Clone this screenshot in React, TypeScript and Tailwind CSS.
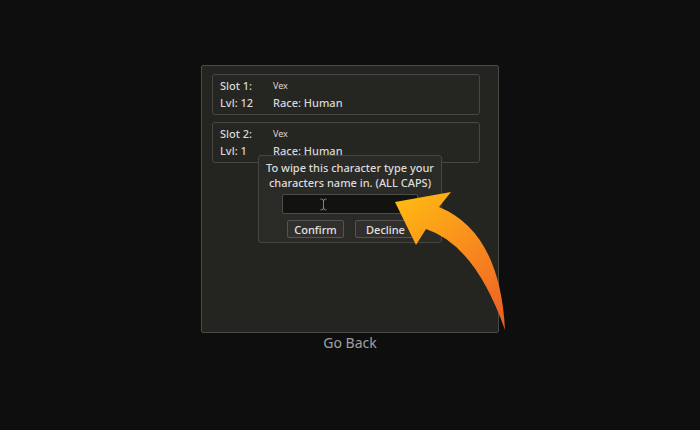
import { TextCursor } from 'lucide-react'

const slots = [
  { slot: 'Slot 1:', name: 'Vex', lvl: 'Lvl: 12', race: 'Race: Human' },
  { slot: 'Slot 2:', name: 'Vex', lvl: 'Lvl: 1', race: 'Race: Human' },
]

function CurvedArrow() {
  return (
    <svg className="absolute left-0 top-0 pointer-events-none" width="700" height="430" viewBox="0 0 700 430">
      <defs>
        <linearGradient id="arrowGrad" x1="405" y1="195" x2="505" y2="330" gradientUnits="userSpaceOnUse">
          <stop offset="0" stopColor="#ffb912" />
          <stop offset="0.5" stopColor="#f8891e" />
          <stop offset="1" stopColor="#ec5c24" />
        </linearGradient>
      </defs>
      <path
        d="M395 202 L451 192 L439 207 Q500 232 505 330 Q475 245 426 229 L416 245 Z"
        fill="url(#arrowGrad)"
      />
    </svg>
  )
}

export default function App() {
  return (
    <div
      className="relative w-[700px] h-[430px] bg-[#0e0e0e] flex flex-col items-center pt-[65px] overflow-hidden"
      style={{ fontFamily: '"Noto Sans", "Open Sans", sans-serif' }}
    >
      <div className="relative w-[298px] h-[268px] rounded-[2px] border border-[#4a4a46] bg-[#242421] pl-[10px] pt-[8px] flex flex-col gap-[7px]">
        {slots.map((s) => (
          <div
            key={s.slot}
            className="w-[268px] h-[41px] rounded-[3px] border border-[#474743] bg-[#252522] pl-[7px] pt-[2px] text-[11px] leading-[17px] font-medium text-[#d8d8d6]"
          >
            <div className="flex items-center">
              <span className="w-[53px]">{s.slot}</span>
              <span className="text-[9px] font-normal">{s.name}</span>
            </div>
            <div className="flex items-center">
              <span className="w-[53px]">{s.lvl}</span>
              <span>{s.race}</span>
            </div>
          </div>
        ))}

        <div className="absolute left-[56px] top-[89px] w-[184px] h-[88px] rounded-[3px] border border-[#464541] bg-[#2a2a27] pt-[4px] flex flex-col items-center">
          <p className="text-[11px] leading-[15px] font-medium text-[#dcdcda] text-center">
            To wipe this character type your
            <br />
            characters name in. (ALL CAPS)
          </p>
          <div className="mt-[4px] w-[136px] h-[20px] rounded-[2px] border border-[#4e4d49] bg-[#121211] flex items-center pl-[34px]">
            <TextCursor size={13} strokeWidth={1.5} className="text-[#9a9a98]" />
          </div>
          <div className="mt-[6px] flex gap-[11px] pl-[3px]">
            <button className="w-[57px] h-[18px] rounded-[2px] border border-[#55544f] bg-[#302f2b] text-[11px] font-medium leading-none text-[#e2e2e0]">
              Confirm
            </button>
            <button className="w-[61px] h-[18px] rounded-[2px] border border-[#55544f] bg-[#302f2b] text-[11px] font-medium leading-none text-[#e2e2e0]">
              Decline
            </button>
          </div>
        </div>
      </div>

      <div className="text-[14px] leading-[20px] text-[#a0a0a0]">Go Back</div>

      <CurvedArrow />
    </div>
  )
}
